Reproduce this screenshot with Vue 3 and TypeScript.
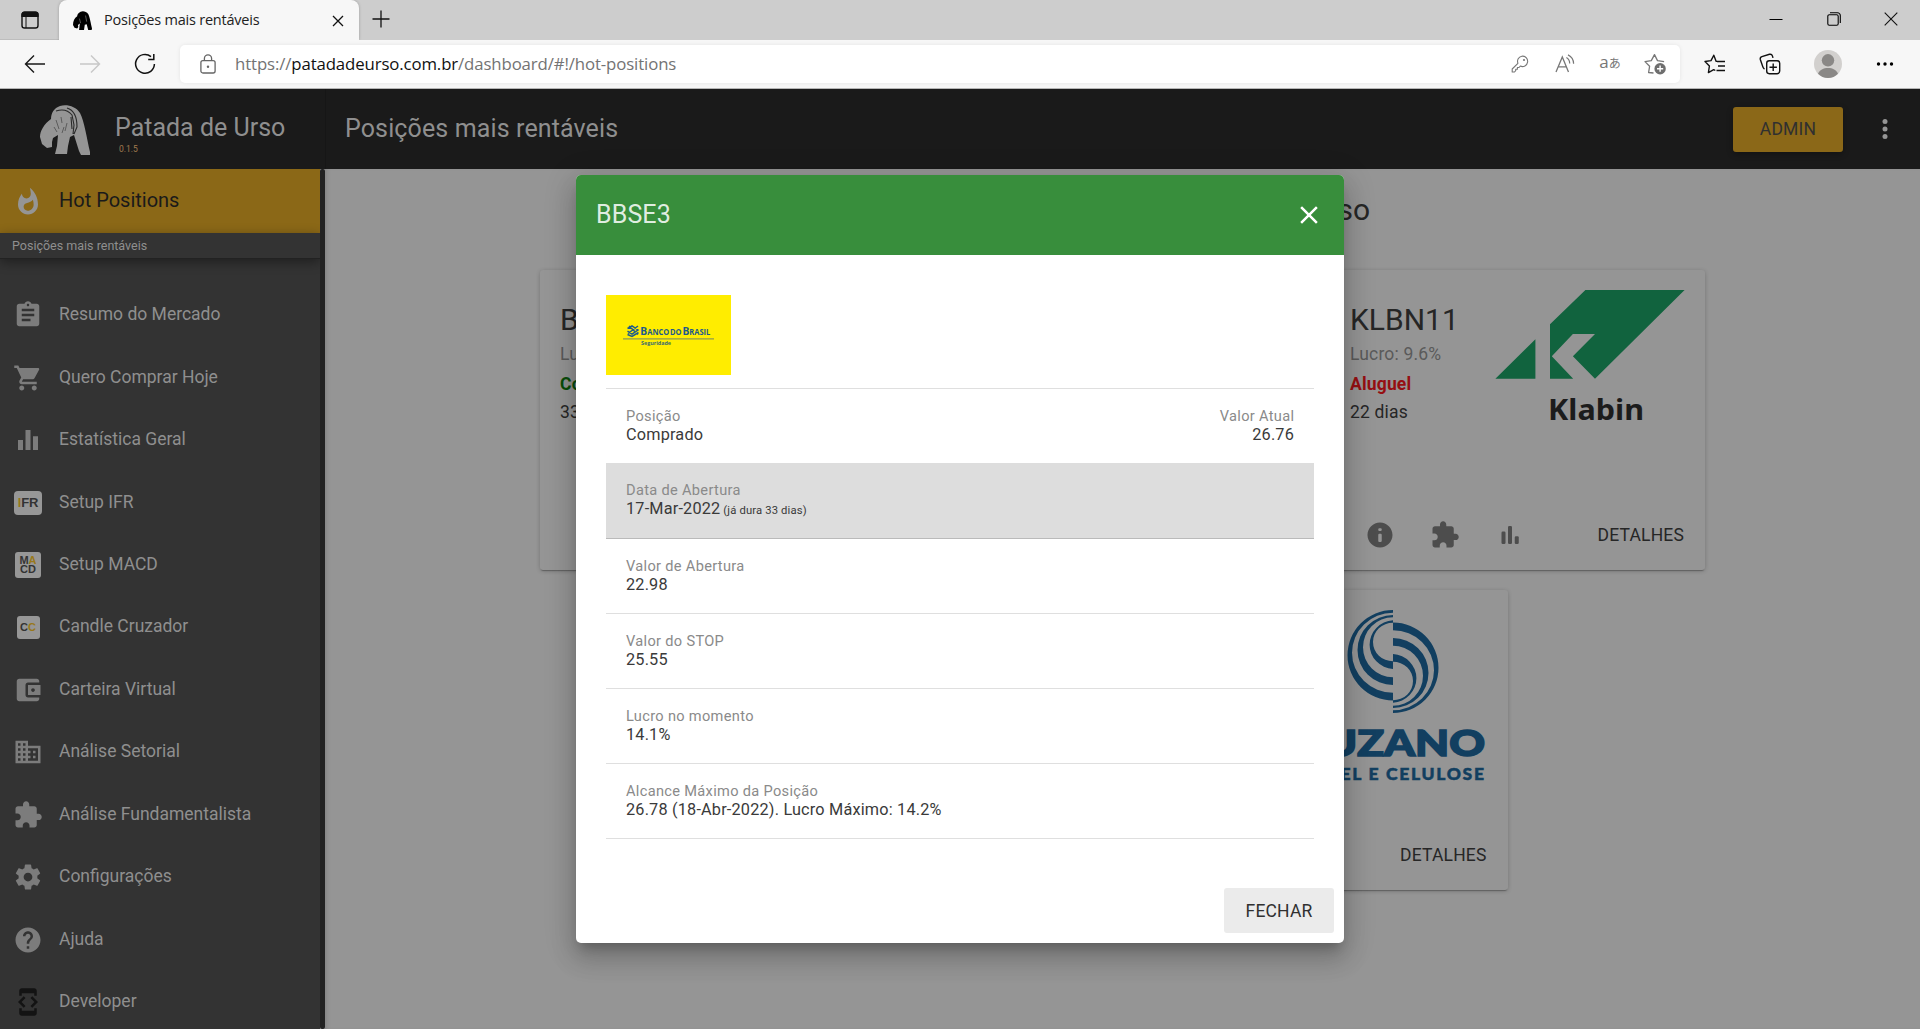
<script setup lang="ts">
interface MenuItem {
  label: string
  path?: string
  badge?: 'ifr' | 'macd' | 'cc'
  dark?: boolean
}

interface Detail {
  label: string
  value: string
  note?: string
  active?: boolean
  sideLabel?: string
  sideValue?: string
}

const extensionPath =
  'M20.5 11H19V7c0-1.1-.9-2-2-2h-4V3.5C13 2.12 11.88 1 10.5 1S8 2.12 8 3.5V5H4c-1.1 0-1.99.9-1.99 2v3.8H3.5c1.49 0 2.7 1.21 2.7 2.7s-1.21 2.7-2.7 2.7H2V20c0 1.1.9 2 2 2h3.8v-1.5c0-1.49 1.21-2.7 2.7-2.7 1.49 0 2.7 1.21 2.7 2.7V22H17c1.1 0 2-.9 2-2v-4h1.5c1.38 0 2.5-1.12 2.5-2.5S21.88 11 20.5 11z'

const menu: MenuItem[] = [
  {
    label: 'Resumo do Mercado',
    path: 'M19 3h-4.18C14.4 1.84 13.3 1 12 1c-1.3 0-2.4.84-2.82 2H5c-1.1 0-2 .9-2 2v14c0 1.1.9 2 2 2h14c1.1 0 2-.9 2-2V5c0-1.1-.9-2-2-2zm-7 0c.55 0 1 .45 1 1s-.45 1-1 1-1-.45-1-1 .45-1 1-1zm2 14H7v-2h7v2zm3-4H7v-2h10v2zm0-4H7V7h10v2z',
  },
  {
    label: 'Quero Comprar Hoje',
    path: 'M7 18c-1.1 0-1.99.9-1.99 2S5.9 22 7 22s2-.9 2-2-.9-2-2-2zM1 2v2h2l3.6 7.59-1.35 2.45c-.16.28-.25.61-.25.96 0 1.1.9 2 2 2h12v-2H7.42c-.14 0-.25-.11-.25-.25l.03-.12.9-1.63h7.45c.75 0 1.41-.41 1.75-1.03l3.58-6.49c.08-.14.12-.31.12-.48 0-.55-.45-1-1-1H5.21l-.94-2H1zm16 16c-1.1 0-1.99.9-1.99 2s.89 2 1.99 2 2-.9 2-2-.9-2-2-2z',
  },
  { label: 'Estatística Geral', path: 'M10 20h4V4h-4v16zm-6 0h4v-8H4v8zM16 9v11h4V9h-4z' },
  { label: 'Setup IFR', badge: 'ifr' },
  { label: 'Setup MACD', badge: 'macd' },
  { label: 'Candle Cruzador', badge: 'cc' },
  {
    label: 'Carteira Virtual',
    path: 'M21 18v1c0 1.1-.9 2-2 2H5c-1.11 0-2-.9-2-2V5c0-1.1.89-2 2-2h14c1.1 0 2 .9 2 2v1h-9c-1.11 0-2 .9-2 2v8c0 1.1.89 2 2 2h9zm-9-2h10V8H12v8zm4-2.5c-.83 0-1.5-.67-1.5-1.5s.67-1.5 1.5-1.5 1.5.67 1.5 1.5-.67 1.5-1.5 1.5z',
  },
  {
    label: 'Análise Setorial',
    path: 'M12 7V3H2v18h20V7H12zM6 19H4v-2h2v2zm0-4H4v-2h2v2zm0-4H4V9h2v2zm0-4H4V5h2v2zm4 12H8v-2h2v2zm0-4H8v-2h2v2zm0-4H8V9h2v2zm0-4H8V5h2v2zm10 12h-8v-2h2v-2h-2v-2h2v-2h-2V9h8v10zm-2-8h-2v2h2v-2zm0 4h-2v2h2v-2z',
  },
  { label: 'Análise Fundamentalista', path: extensionPath },
  {
    label: 'Configurações',
    path: 'M19.43 12.98c.04-.32.07-.64.07-.98s-.03-.66-.07-.98l2.11-1.65c.19-.15.24-.42.12-.64l-2-3.46c-.12-.22-.39-.3-.61-.22l-2.49 1c-.52-.4-1.08-.73-1.69-.98l-.38-2.65C14.46 2.18 14.25 2 14 2h-4c-.25 0-.46.18-.49.42l-.38 2.65c-.61.25-1.17.59-1.69.98l-2.49-1c-.23-.09-.49 0-.61.22l-2 3.46c-.13.22-.07.49.12.64l2.11 1.65c-.04.32-.07.65-.07.98s.03.66.07.98l-2.11 1.65c-.19.15-.24.42-.12.64l2 3.46c.12.22.39.3.61.22l2.49-1c.52.4 1.08.73 1.69.98l.38 2.65c.03.24.24.42.49.42h4c.25 0 .46-.18.49-.42l.38-2.65c.61-.25 1.17-.59 1.69-.98l2.49 1c.23.09.49 0 .61-.22l2-3.46c.12-.22.07-.49-.12-.64l-2.11-1.65zM12 15.5c-1.93 0-3.5-1.57-3.5-3.5s1.57-3.5 3.5-3.5 3.5 1.57 3.5 3.5-1.57 3.5-3.5 3.5z',
  },
  {
    label: 'Ajuda',
    path: 'M12 2C6.48 2 2 6.48 2 12s4.48 10 10 10 10-4.48 10-10S17.52 2 12 2zm1 17h-2v-2h2v2zm2.07-7.75l-.9.92C13.45 12.9 13 13.5 13 15h-2v-.5c0-1.1.45-2.1 1.17-2.83l1.24-1.26c.37-.36.59-.86.59-1.41 0-1.1-.9-2-2-2s-2 .9-2 2H8c0-2.21 1.79-4 4-4s4 1.79 4 4c0 .88-.36 1.68-.93 2.25z',
  },
  {
    label: 'Developer',
    dark: true,
    path: 'M7 5h10v2h2V3c0-1.1-.9-1.99-2-1.99L7 1c-1.1 0-2 .9-2 2v4h2V5zm8.41 11.59L20 12l-4.59-4.59L14 8.83 17.17 12 14 15.17l1.41 1.42zM10 15.17L6.83 12 10 8.83 8.59 7.41 4 12l4.59 4.59L10 15.17zM17 19H7v-2H5v4c0 1.1.9 2 2 2h10c1.1 0 2-.9 2-2v-4h-2v2z',
  },
]

const details: Detail[] = [
  { label: 'Posição', value: 'Comprado', sideLabel: 'Valor Atual', sideValue: '26.76' },
  { label: 'Data de Abertura', value: '17-Mar-2022', note: '(já dura 33 dias)', active: true },
  { label: 'Valor de Abertura', value: '22.98' },
  { label: 'Valor do STOP', value: '25.55' },
  { label: 'Lucro no momento', value: '14.1%' },
  { label: 'Alcance Máximo da Posição', value: '26.78 (18-Abr-2022). Lucro Máximo: 14.2%' },
]
</script>

<template>
  <div class="window">
    <div class="tabstrip">
      <div class="tab-actions">
        <svg width="20" height="20" viewBox="0 0 20 20">
          <rect x="2" y="2.2" width="16" height="15.8" rx="2.6" fill="none" stroke="#111" stroke-width="1.4" />
          <path d="M1.4 7V4.4A3 3 0 0 1 4.4 1.5h11.2a3 3 0 0 1 3 2.900V7z" fill="#111" />
          <path d="M6 7v11" stroke="#111" stroke-width="1" />
        </svg>
      </div>
      <div class="tab">
        <svg class="favicon" width="19" height="19" viewBox="0 0 50 50">
          <path d="M20 2C26-1 35 1 40 8c4 7 7 26 10 38l-1 4H40l-4-15-5 1-2 14H16l2-17-5 4 1 5-3 4-7-2-4-7C0 26 4 19 11 14c0-5 3-9 9-12z" fill="#000" />
          <path d="M17 20l3 12M33 12l3 16" fill="none" stroke="#999" stroke-width="1.500" />
        </svg>
        <span class="tab-title">Posições mais rentáveis</span>
        <svg class="tab-close" width="12" height="12" viewBox="0 0 12 12">
          <path d="M1 1l10 10M11 1L1 11" stroke="#111" stroke-width="1.3" />
        </svg>
      </div>
      <svg class="new-tab" width="18" height="18" viewBox="0 0 18 18">
        <path d="M9 .5v17M.5 9h17" stroke="#111" stroke-width="1.3" />
      </svg>
      <div class="window-buttons">
        <svg width="14" height="14" viewBox="0 0 14 14"><path d="M.5 7.5h13" stroke="#000" /></svg>
        <svg width="14" height="14" viewBox="0 0 14 14">
          <rect x=".8" y="2.8" width="10.4" height="10.4" rx="1.5" fill="none" stroke="#000" stroke-width="1.1" />
          <path d="M3 .8h7.5a2.8 2.8 0 0 1 2.8 2.8V11" fill="none" stroke="#000" stroke-width="1.1" />
        </svg>
        <svg width="14" height="14" viewBox="0 0 14 14"><path d="M.7.7l12.6 12.6M13.3.7L.7 13.3" stroke="#111" stroke-width="1.1" /></svg>
      </div>
    </div>

    <div class="toolbar">
      <div class="nav">
        <svg width="22" height="20" viewBox="0 0 22 20"><path d="M10 1.5L1.5 10l8.5 8.5M1.5 10H21" fill="none" stroke="#1a1a1a" stroke-width="1.4" /></svg>
        <svg width="22" height="20" viewBox="0 0 22 20"><path d="M12 1.5l8.5 8.5-8.5 8.5M20.5 10H1" fill="none" stroke="#c8c8c8" stroke-width="1.4" /></svg>
        <svg width="22" height="22" viewBox="0 0 22 22">
          <path d="M17 3.6A9.4 9.4 0 1 0 20.4 11" fill="none" stroke="#111" stroke-width="1.5" />
          <path d="M19.8 1v5.6h-5.6" fill="none" stroke="#111" stroke-width="1.5" />
        </svg>
      </div>
      <div class="url-bar">
        <svg class="lock" width="16" height="20" viewBox="0 0 16 20">
          <rect x=".9" y="6.6" width="14.2" height="12.4" rx="2" fill="none" stroke="#666" stroke-width="1.3" />
          <path d="M4.4 6.6V4.4a3.6 3.6 0 0 1 7.2 0v2.2" fill="none" stroke="#666" stroke-width="1.3" />
          <circle cx="8" cy="12.8" r="1.2" fill="#666" />
        </svg>
        <span class="url">https://<b>patadadeurso.com.br</b>/dashboard/#!/hot-positions</span>
        <div class="url-icons">
          <svg width="18" height="18" viewBox="0 0 18 18">
            <path d="M10.8 1.2a5.2 5.2 0 1 1-1.5 9.9L8 12.5H6.4v1.7H4.7v1.5L3.5 17H1.2v-3L6.9 8.3a5.3 5.3 0 0 1 3.9-7.1z" fill="none" stroke="#777" stroke-width="1.1" stroke-linejoin="round" />
            <circle cx="13" cy="5" r="1.1" fill="#777" />
          </svg>
          <svg width="20" height="20" viewBox="0 0 20 20">
            <path d="M1 18L7.3 3l6.2 15M3.2 12.8h8.2" fill="none" stroke="#777" stroke-width="1.3" />
            <path d="M11.4 3.5a7 7 0 0 1 3.3 6M13 .9a10 10 0 0 1 5.6 8.9" fill="none" stroke="#777" stroke-width="1.2" />
          </svg>
          <span class="translate"><span>a</span>あ</span>
          <svg width="22" height="22" viewBox="0 0 22 22">
            <path d="M9.5 20L4.6 19.5l1-6.2L1 8.6l6.3-1L10.5 1.6l3 6 6.6 1" fill="none" stroke="#777" stroke-width="1.3" stroke-linejoin="round" />
            <circle cx="16.1" cy="15.7" r="5.7" fill="#6e6e6e" />
            <path d="M16.1 12.6v6.2M13 15.7h6.2" stroke="#fff" stroke-width="1.4" />
          </svg>
        </div>
      </div>
      <div class="browser-actions">
        <span>
          <svg width="22" height="20" viewBox="0 0 22 20">
            <path d="M13 7.4h-.8L9.8 1.2 7 6.6 1 7.5l4.4 4.5-1 6.6 5.3-3 1.6.9M13 7.5h8M14 12h7M12.5 16.5H21" fill="none" stroke="#111" stroke-width="1.4" stroke-linejoin="round" />
          </svg>
        </span>
        <span>
          <svg width="22" height="22" viewBox="0 0 22 22">
            <rect x="7.7" y="7.7" width="13" height="13" rx="2.6" fill="none" stroke="#111" stroke-width="1.4" />
            <path d="M14.2 10.5v7.4M10.5 14.2h7.4M5.5 16c-.8-.4-1.3-1-1.5-1.8L1.3 6.5c-.3-1.5.3-2.5 1.6-2.9L10.500 1.3c1.5-.3 2.5.3 2.9 1.6l.6 2" fill="none" stroke="#111" stroke-width="1.4" />
          </svg>
        </span>
        <span class="avatar-slot">
          <svg width="28" height="28" viewBox="0 0 28 28">
            <circle cx="14" cy="14" r="14" fill="#d2d0ce" />
            <circle cx="14" cy="10.3" r="6.2" fill="#8a8886" />
            <path d="M4 23.7c1.500-3.7 5.500-5.7 10-5.7s8.500 2 10 5.7a14 14 0 0 1-20 0z" fill="#8a8886" />
          </svg>
        </span>
        <span class="more-slot">
          <svg width="18" height="4" viewBox="0 0 18 4">
            <circle cx="2.5" cy="2" r="1.7" /><circle cx="9" cy="2" r="1.7" /><circle cx="15.5" cy="2" r="1.7" />
          </svg>
        </span>
      </div>
    </div>

    <header class="app-header">
      <div class="brand">
        <svg class="bear" width="50" height="50" viewBox="0 0 50 50">
          <path d="M20 1C26-1 36 1 40 8c4 7 7 26 10 39v3H41l-2-4-5-16-4 2-2 9-1 8H15l2-8 1-11-5 3-1 4 0 5-5 1-5-4-2-7C0 26 4 19 11 14c0-6 3-11 9-13z" fill="#959595" />
          <path d="M16 6c6-2 12-1 16 4l2 10-1 9M27 3c7 2 10 9 10 19l-3 7M31 12l1 12" fill="none" stroke="#2a2a2a" stroke-width="1.100" />
          <path d="M16 15l3 9M21 12l1 6M22 28l2-6M14 22l3 5M27 18l-2 8" fill="none" stroke="#5c5c5c" stroke-width="1" />
        </svg>
        <div class="brand-text">
          <span class="brand-name">Patada de Urso</span>
          <span class="version">0.1.5</span>
        </div>
      </div>
      <h1>Posições mais rentáveis</h1>
      <button class="admin">ADMIN</button>
      <svg class="dots" width="6" height="20" viewBox="0 0 6 20">
        <circle cx="3" cy="2.5" r="2.5" /><circle cx="3" cy="10" r="2.5" /><circle cx="3" cy="17.5" r="2.5" />
      </svg>
    </header>

    <div class="body">
      <nav class="sidebar">
        <div class="hot">
          <svg width="30" height="30" viewBox="0 0 24 24">
            <path d="M13.5.67s.74 2.65.74 4.8c0 2.06-1.35 3.73-3.41 3.73-2.07 0-3.63-1.67-3.63-3.73l.03-.36C5.21 7.51 4 10.62 4 14c0 4.42 3.58 8 8 8s8-3.58 8-8C20 8.61 17.41 3.8 13.5.67zM11.71 19c-1.78 0-3.22-1.4-3.22-3.14 0-1.62 1.05-2.76 2.81-3.12 1.77-.36 3.6-1.21 4.62-2.58.39 1.29.59 2.65.59 4.04 0 2.65-2.15 4.8-4.8 4.8z" />
          </svg>
          <span>Hot Positions</span>
        </div>
        <div class="hot-sub">Posições mais rentáveis</div>
        <ul>
          <li v-for="item in menu" :key="item.label">
            <span class="icon" :class="{ dark: item.dark }">
              <svg v-if="item.path" width="30" height="30" viewBox="0 0 24 24"><path :d="item.path" /></svg>
              <span v-else-if="item.badge === 'ifr'" class="badge ifr"><i>I</i>FR</span>
              <span v-else-if="item.badge === 'macd'" class="badge macd"><span>M<i>A</i></span><span>CD</span></span>
              <span v-else class="badge cc">C<i>C</i></span>
            </span>
            <span>{{ item.label }}</span>
          </li>
        </ul>
      </nav>
      <div class="edge"></div>

      <main>
        <h2>Patada de Urso</h2>
        <div class="cards">
          <article class="card">
            <div class="info">
              <h3>BBSE3</h3>
              <p class="profit">Lucro: 14.1%</p>
              <p class="bought">Comprado</p>
              <p class="days">33 dias</p>
            </div>
          </article>
          <article class="card"></article>
          <article class="card">
            <div class="top">
              <div class="info">
                <h3>KLBN11</h3>
                <p class="profit">Lucro: 9.6%</p>
                <p class="rent">Aluguel</p>
                <p class="days">22 dias</p>
              </div>
              <svg class="klabin" width="190" height="140" viewBox="0 0 190 140">
                <path d="M90.4 0H189.6L100 88.7 77.9 66.3 100 44H77.9L56.8 66.3 78.2 88.7H55V34.3zM40.4 49.3V88.7H.4z" fill="#11633e" />
                <text x="53" y="130" textLength="96" lengthAdjust="spacingAndGlyphs">Klabin</text>
              </svg>
            </div>
            <div class="actions">
              <svg width="30" height="30" viewBox="0 0 24 24"><path d="M12 2C6.48 2 2 6.48 2 12s4.48 10 10 10 10-4.48 10-10S17.52 2 12 2zm-.4 4.500h.8c.55 0 1 .45 1 1v.2c0 .55-.45 1-1 1h-.8c-.55 0-1-.45-1-1v-.2c0-.55.45-1 1-1zm0 4.500h.8c.55 0 1 .45 1 1v4.500c0 .55-.45 1-1 1h-.8c-.55 0-1-.45-1-1V12c0-.55.45-1 1-1z" /></svg>
              <svg width="30" height="30" viewBox="0 0 24 24"><path :d="extensionPath" /></svg>
              <svg width="30" height="30" viewBox="0 0 24 24">
                <rect x="5.2" y="9.2" width="3.2" height="10" rx="1" /><rect x="10.4" y="4.8" width="3.2" height="14.4" rx="1" /><rect x="15.8" y="13" width="3.2" height="6.2" rx="1" />
              </svg>
              <span class="details-btn">DETALHES</span>
            </div>
          </article>
          <article class="card"></article>
          <article class="card">
            <div class="top end">
              <svg class="suzano" width="190" height="180" viewBox="1298 610 190 180">
                <g id="suzano-half">
                  <path d="M1393 610A45.5 45.25 0 0 0 1393 700.5V692.7A41 40 0 0 1 1393 612.7z" />
                  <path d="M1393 615A35.5 35 0 0 0 1393 685V677.3A30 30 0 0 1 1393 617.3z" />
                  <path d="M1393 620.3A25 24.4 0 0 0 1393 669V661.3A20 19.3 0 0 1 1393 622.7z" />
                </g>
                <use href="#suzano-half" transform="rotate(180 1393 661.5)" />
                <text class="name" x="1300" y="755.500" textLength="185" lengthAdjust="spacingAndGlyphs">SUZANO</text>
                <text class="tag" x="1302" y="780" textLength="182" lengthAdjust="spacing">PAPEL E CELULOSE</text>
              </svg>
            </div>
            <div class="actions"><span class="details-btn">DETALHES</span></div>
          </article>
        </div>
      </main>
    </div>

    <section class="dialog">
      <div class="dialog-bar">
        <span>BBSE3</span>
        <svg width="30" height="30" viewBox="0 0 24 24">
          <path d="M19 6.41L17.59 5 12 10.59 6.41 5 5 6.41 10.59 12 5 17.59 6.41 19 12 13.41 17.59 19 19 17.59 13.41 12z" fill="#fff" />
        </svg>
      </div>
      <div class="dialog-body">
        <svg class="bank" width="125" height="80" viewBox="0 0 125 80">
          <rect width="125" height="80" fill="#ffed00" />
          <g fill="none" stroke="#1d5a8c" stroke-width="1.5">
            <path d="M21.500 33.500l4.500-2.500 6 4-6 4.200-4.500-3M21.500 39.500l4.500 2 6.500-4M23 31l9 8.500M32 31l-10 7.500" />
          </g>
          <text class="bank-name" x="34.3" y="40" textLength="70" lengthAdjust="spacingAndGlyphs">Banco do Brasil</text>
          <path d="M17 43.8h91" stroke="#8c9a50" stroke-width="1.2" />
          <text class="bank-sub" x="35" y="50" textLength="30" lengthAdjust="spacingAndGlyphs">Seguridade</text>
        </svg>
        <dl>
          <div v-for="row in details" :key="row.label" class="row" :class="{ active: row.active }">
            <div>
              <dt>{{ row.label }}</dt>
              <dd>{{ row.value }}<small v-if="row.note">&nbsp;{{ row.note }}</small></dd>
            </div>
            <div v-if="row.sideLabel" class="side">
              <dt>{{ row.sideLabel }}</dt>
              <dd>{{ row.sideValue }}</dd>
            </div>
          </div>
        </dl>
      </div>
      <div class="dialog-actions"><button>FECHAR</button></div>
    </section>
  </div>
</template>

<style>
body {
  margin: 0;
  overflow: hidden;
}
</style>

<style scoped>
.window {
  position: relative;
  width: 1920px;
  height: 1029px;
  overflow: hidden;
  display: flex;
  flex-direction: column;
  font-family: Roboto, "Liberation Sans", sans-serif;
  background: #959595;
}
* {
  box-sizing: border-box;
}
svg {
  display: block;
  flex: none;
}
h1,
h2,
h3,
p,
ul,
dl,
dt,
dd {
  margin: 0;
  padding: 0;
  font-weight: 400;
}
button {
  border: 0;
  font: inherit;
}

/* browser chrome */
.tabstrip {
  height: 40px;
  flex: none;
  display: flex;
  background: #cdcdcd;
}
.tab-actions {
  width: 59px;
  padding: 10px 0 0 20px;
  box-shadow: inset 0 -1px 0 #bdbdbd;
}
.tab {
  width: 300px;
  display: flex;
  align-items: center;
  padding-left: 14px;
  background: #f7f7f7;
  border-radius: 8px 8px 0 0;
  box-shadow: 0 0 3px rgba(0, 0, 0, 0.25);
  clip-path: inset(-4px -4px 0 -4px);
}
.tab-title {
  width: 156px;
  margin-left: 12px;
  font: 14.5px/20px "Open Sans", sans-serif;
  letter-spacing: -0.22px;
  white-space: nowrap;
  color: #222;
}
.tab-close {
  margin: 1px 0 0 72px;
}
.new-tab {
  margin: 10px 0 0 13px;
}
.window-buttons {
  margin-left: auto;
  display: flex;
  gap: 43.5px;
  padding: 12px 22px 0 0;
}
.toolbar {
  height: 49px;
  flex: none;
  display: flex;
  align-items: center;
  background: #f7f7f7;
  border-bottom: 1px solid #b5b5b5;
}
.nav {
  width: 180px;
  display: flex;
  align-items: center;
  gap: 33px;
  padding-left: 24px;
}
.url-bar {
  width: 1500px;
  height: 38px;
  display: flex;
  align-items: center;
  padding: 0 2.5px 0 20px;
  background: #fff;
  border-radius: 5px;
  box-shadow: 0 0 4px rgba(0, 0, 0, 0.08);
}
.url {
  margin-left: 19px;
  font: 16.8px/24px "Open Sans", sans-serif;
  letter-spacing: -0.12px;
  color: #737373;
  white-space: nowrap;
}
.url b {
  font-weight: 400;
  color: #111;
}
.url-icons {
  margin-left: auto;
  display: grid;
  grid-template-columns: repeat(4, 45px);
  justify-items: center;
  align-items: center;
}
.translate {
  padding-bottom: 3px;
  font: 12px/22px "Open Sans", "Noto Sans CJK JP", sans-serif;
  color: #777;
}
.translate span {
  font-size: 17px;
}
.browser-actions {
  display: flex;
  margin-left: 7.5px;
}
.browser-actions span {
  width: 55px;
  display: flex;
  justify-content: center;
  align-items: center;
}
.browser-actions .avatar-slot {
  width: 61px;
}
.browser-actions .more-slot {
  width: 53px;
}

/* application header */
.app-header {
  height: 80px;
  flex: none;
  display: flex;
  align-items: center;
  background: #1a1a1a;
  color: #8f8f8f;
}
.brand {
  width: 326px;
  height: 80px;
  display: flex;
  padding-left: 40px;
  border-right: 1px solid #161616;
}
.bear {
  margin-top: 16px;
}
.brand-text {
  margin: 24px 0 0 25px;
  display: flex;
  flex-direction: column;
}
.brand-name {
  font-size: 25px;
  line-height: 30px;
}
.version {
  margin: 1px 0 0 4px;
  font-size: 8.5px;
  line-height: 11px;
  color: #a17c50;
}
h1 {
  margin: 0 auto 0 19px;
  font-size: 25px;
  line-height: 30px;
  letter-spacing: 0.125px;
}
.admin {
  width: 110px;
  height: 45px;
  border-radius: 3px;
  background: #8b6818;
  color: #303030;
  font-size: 17.5px;
  letter-spacing: 0.175px;
  box-shadow: 0 2px 6px rgba(0, 0, 0, 0.3);
}
.dots {
  margin: 0 32px 0 39px;
  fill: #959595;
}

/* sidebar */
.body {
  flex: 1;
  display: flex;
  min-height: 0;
}
.sidebar {
  width: 320px;
  flex: none;
  background: #333;
  color: #8f8f8f;
  overflow: hidden;
}
.hot {
  height: 64px;
  display: flex;
  align-items: center;
  padding: 1px 0 0 13px;
  background: #8b6817;
  color: #1a1a1a;
  font-size: 20px;
}
.hot svg {
  margin-right: 16px;
  fill: #959595;
}
.hot span {
  padding-bottom: 3px;
}
.hot-sub {
  height: 26px;
  padding-left: 12px;
  font-size: 12.5px;
  line-height: 25px;
  border-bottom: 1px solid #222;
  box-shadow: 0 3px 12px rgba(0, 0, 0, 0.4);
}
ul {
  padding-top: 25px;
  list-style: none;
}
li {
  height: 62.45px;
  display: flex;
  align-items: center;
  font-size: 17.5px;
}
li > span:last-child {
  padding-bottom: 2px;
}
.icon {
  width: 30px;
  height: 30px;
  margin: 0 16px 0 13px;
  display: flex;
  align-items: center;
  justify-content: center;
  fill: #7c7c7c;
}
.icon.dark {
  fill: #131313;
}
.badge {
  display: flex;
  align-items: center;
  justify-content: center;
  background: #979797;
  color: #333;
  border-radius: 3px;
  font: bold 13px/1 "Liberation Sans", sans-serif;
}
.badge i {
  font-style: normal;
  color: #98781a;
}
.ifr {
  width: 28px;
  height: 24px;
  border-radius: 4px;
  letter-spacing: -0.2px;
}
.macd {
  width: 26px;
  height: 26px;
  flex-direction: column;
  font-size: 11px;
  line-height: 9px;
}
.cc {
  width: 23px;
  height: 23px;
  font-size: 11px;
}
.edge {
  width: 5px;
  background: #222;
  border-radius: 2px;
}

/* page content */
main {
  flex: 1;
  background: #959595;
  box-shadow: inset 4px 0 5px -3px rgba(0, 0, 0, 0.15);
}
h2 {
  margin-top: 21px;
  padding-right: 550px;
  text-align: right;
  font-size: 30px;
  line-height: 40px;
  color: #262626;
}
.cards {
  display: flex;
  flex-wrap: wrap;
  justify-content: center;
  gap: 20px;
  width: 1165px;
  margin: 40px auto 0 215px;
}
.card {
  width: 375px;
  height: 300px;
  padding: 20px;
  display: flex;
  flex-direction: column;
  justify-content: space-between;
  border-radius: 3px;
  background: #959595;
  box-shadow: 0 1px 4px rgba(0, 0, 0, 0.22), 0 2px 1px -1px rgba(0, 0, 0, 0.25);
}
.top {
  display: flex;
  justify-content: space-between;
}
.top.end {
  justify-content: flex-end;
}
.info {
  padding-top: 12px;
  white-space: nowrap;
  font-size: 17.5px;
  color: #262626;
}
.info p {
  letter-spacing: 0.175px;
}
h3 {
  font-size: 30px;
  line-height: 35px;
}
.profit {
  margin-top: 2px;
  line-height: 30px;
  color: #5a5a5a;
}
.info .bought,
.info .rent {
  line-height: 30px;
  font-weight: 700;
  color: #0a4d0a;
}
.info .rent {
  color: #960f12;
}
.days {
  line-height: 26px;
}
.klabin text {
  font: bold 28px "Noto Sans", sans-serif;
  fill: #1c1c1c;
}
.actions {
  display: flex;
  align-items: center;
  gap: 35px;
  height: 30px;
  padding-left: 15px;
  fill: #4d4d4d;
}
.details-btn {
  margin-left: auto;
  padding: 0 1px 1px 0;
  font-size: 17.5px;
  letter-spacing: 0.175px;
  color: #262626;
}
.suzano {
  fill: #123f60;
}
.suzano .name {
  font: 900 36px Lato, sans-serif;
  stroke: #123f60;
  stroke-width: 1.6px;
}
.suzano .tag {
  font: 900 17.5px Lato, sans-serif;
  stroke: #123f60;
  stroke-width: 0.5px;
}

/* position dialog */
.dialog {
  position: absolute;
  left: 576px;
  top: 175px;
  width: 768px;
  height: 768px;
  display: flex;
  flex-direction: column;
  border-radius: 5px;
  overflow: hidden;
  background: #fff;
  box-shadow: 0 9px 10px -5px rgba(0, 0, 0, 0.2), 0 16px 24px 2px rgba(0, 0, 0, 0.14), 0 6px 30px 5px rgba(0, 0, 0, 0.12);
}
.dialog-bar {
  height: 80px;
  display: flex;
  align-items: center;
  justify-content: space-between;
  padding: 0 20px;
  background: #388e3c;
  color: rgba(255, 255, 255, 0.87);
  font-size: 25px;
  letter-spacing: 0.125px;
}
.dialog-bar span {
  padding-bottom: 2px;
}
.dialog-body {
  flex: 1;
  padding: 40px 30px 0;
}
dl {
  margin-top: 13px;
  border-top: 1px solid #dfdfdf;
}
.row {
  height: 75px;
  display: flex;
  justify-content: space-between;
  align-items: center;
  padding: 0 20px 1px;
  border-bottom: 1px solid #dfdfdf;
}
.row.active {
  margin-top: -1px;
  height: 76px;
  padding-top: 1px;
  background: #ddd;
  border-bottom-color: #bababa;
}
.side {
  text-align: right;
}
dt {
  font-size: 14.6px;
  line-height: 17.5px;
  letter-spacing: 0.32px;
  color: #8a8a8a;
}
dd {
  font-size: 16.25px;
  line-height: 17.5px;
  letter-spacing: 0.19px;
  color: #3a3a3a;
}
.side dt {
  margin-right: -0.3px;
}
small {
  font-size: 11.25px;
  letter-spacing: 0.15px;
}
.bank-name {
  font: bold 11px "Open Sans", sans-serif;
  font-variant: small-caps;
  word-spacing: -2px;
  fill: #1d5a8c;
}
.bank-sub {
  font: bold 5.5px "Open Sans", sans-serif;
  fill: #3a6a70;
}
.dialog-actions {
  display: flex;
  justify-content: flex-end;
  padding: 0 10px 10px;
}
.dialog-actions button {
  width: 110px;
  height: 45px;
  border-radius: 3px;
  background: #ebebeb;
  color: #303030;
  font-size: 17.5px;
  letter-spacing: 0.175px;
}
</style>
